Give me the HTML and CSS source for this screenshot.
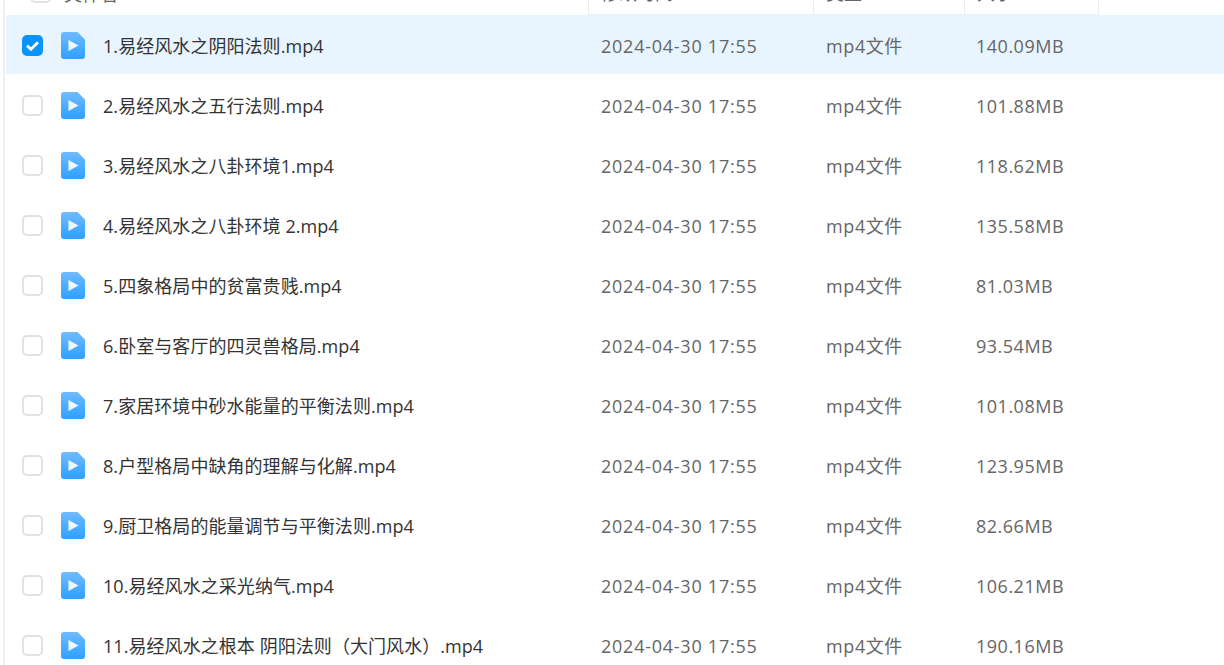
FILE: index.html
```html
<!DOCTYPE html>
<html lang="zh-CN">
<head>
    <meta charset="UTF-8">
    <title>文件列表</title>
    <link rel="stylesheet" href="styles.css">
</head>
<body>
    <svg class="defs" width="0" height="0">
        <defs>
            <linearGradient id="fileFill" x1="0" y1="0" x2="0" y2="1">
                <stop offset="0" stop-color="#6fbbff"/>
                <stop offset="1" stop-color="#30a0ff"/>
            </linearGradient>
            <symbol id="videoIcon" viewBox="0 0 24 27">
                <path d="M3 0H16.5L24 7.5V24a3 3 0 0 1-3 3H3a3 3 0 0 1-3-3V3a3 3 0 0 1 3-3Z" fill="url(#fileFill)"/>
                <path d="M7.5 8 17.5 13.5 7.5 19Z" fill="#eef7ff"/>
            </symbol>
        </defs>
    </svg>

    <div class="list">
        <div class="head">
            <div class="head-name"><span class="check"></span><span class="head-label">文件名</span></div>
            <div class="head-cell">修改时间</div>
            <div class="head-cell">类型</div>
            <div class="head-cell">大小</div>
        </div>

        <div class="row selected">
            <span class="check on"><svg width="21" height="21" viewBox="0 0 21 21"><path d="M5 10.6 9 14.2 16 7.2" fill="none" stroke="#fff" stroke-width="2.8"/></svg></span>
            <svg class="icon"><use href="#videoIcon"/></svg>
            <span class="name">1.易经风水之阴阳法则.mp4</span>
            <span class="date">2024-04-30 17:55</span>
            <span class="type">mp4文件</span>
            <span class="size">140.09MB</span>
        </div>
        <div class="row">
            <span class="check"></span>
            <svg class="icon"><use href="#videoIcon"/></svg>
            <span class="name">2.易经风水之五行法则.mp4</span>
            <span class="date">2024-04-30 17:55</span>
            <span class="type">mp4文件</span>
            <span class="size">101.88MB</span>
        </div>
        <div class="row">
            <span class="check"></span>
            <svg class="icon"><use href="#videoIcon"/></svg>
            <span class="name">3.易经风水之八卦环境1.mp4</span>
            <span class="date">2024-04-30 17:55</span>
            <span class="type">mp4文件</span>
            <span class="size">118.62MB</span>
        </div>
        <div class="row">
            <span class="check"></span>
            <svg class="icon"><use href="#videoIcon"/></svg>
            <span class="name">4.易经风水之八卦环境 2.mp4</span>
            <span class="date">2024-04-30 17:55</span>
            <span class="type">mp4文件</span>
            <span class="size">135.58MB</span>
        </div>
        <div class="row">
            <span class="check"></span>
            <svg class="icon"><use href="#videoIcon"/></svg>
            <span class="name">5.四象格局中的贫富贵贱.mp4</span>
            <span class="date">2024-04-30 17:55</span>
            <span class="type">mp4文件</span>
            <span class="size">81.03MB</span>
        </div>
        <div class="row">
            <span class="check"></span>
            <svg class="icon"><use href="#videoIcon"/></svg>
            <span class="name">6.卧室与客厅的四灵兽格局.mp4</span>
            <span class="date">2024-04-30 17:55</span>
            <span class="type">mp4文件</span>
            <span class="size">93.54MB</span>
        </div>
        <div class="row">
            <span class="check"></span>
            <svg class="icon"><use href="#videoIcon"/></svg>
            <span class="name">7.家居环境中砂水能量的平衡法则.mp4</span>
            <span class="date">2024-04-30 17:55</span>
            <span class="type">mp4文件</span>
            <span class="size">101.08MB</span>
        </div>
        <div class="row">
            <span class="check"></span>
            <svg class="icon"><use href="#videoIcon"/></svg>
            <span class="name">8.户型格局中缺角的理解与化解.mp4</span>
            <span class="date">2024-04-30 17:55</span>
            <span class="type">mp4文件</span>
            <span class="size">123.95MB</span>
        </div>
        <div class="row">
            <span class="check"></span>
            <svg class="icon"><use href="#videoIcon"/></svg>
            <span class="name">9.厨卫格局的能量调节与平衡法则.mp4</span>
            <span class="date">2024-04-30 17:55</span>
            <span class="type">mp4文件</span>
            <span class="size">82.66MB</span>
        </div>
        <div class="row">
            <span class="check"></span>
            <svg class="icon"><use href="#videoIcon"/></svg>
            <span class="name">10.易经风水之采光纳气.mp4</span>
            <span class="date">2024-04-30 17:55</span>
            <span class="type">mp4文件</span>
            <span class="size">106.21MB</span>
        </div>
        <div class="row">
            <span class="check"></span>
            <svg class="icon"><use href="#videoIcon"/></svg>
            <span class="name">11.易经风水之根本 阴阳法则（大门风水）.mp4</span>
            <span class="date">2024-04-30 17:55</span>
            <span class="type">mp4文件</span>
            <span class="size">190.16MB</span>
        </div>
    </div>
</body>
</html>
```

FILE: styles.css
```css
* {
    box-sizing: border-box;
    margin: 0;
    padding: 0;
}

html, body {
    height: 100%;
    overflow: hidden;
}

body {
    background: #fff;
    color: #333;
    font-family: "Open Sans", "Noto Sans CJK SC", sans-serif;
    font-size: 18px;
}

.defs {
    position: absolute;
}

.list {
    margin-left: 3px;
    height: 100%;
    border-left: 2px solid #f0f0f0;
    padding-left: 1px;
    overflow: hidden;
}

/* header is scrolled mostly out of view */
.head {
    display: grid;
    grid-template-columns: 582px 225px 151px 135px;
    height: 15px;
    overflow: hidden;
}

.head-name,
.head-cell {
    display: flex;
    align-items: flex-end;
    height: 15px;
    padding-bottom: 9px;
    line-height: 24px;
    color: #666;
}

.head-name {
    padding-left: 24px;
}

.head-name .check {
    margin-bottom: 3px;
}

.head-label {
    margin-left: 13px;
}

.head-cell {
    padding-left: 12px;
    border-left: 1px solid #ececec;
    border-bottom: 1px solid #f0f0f0;
}

.head-cell:last-child {
    border-right: 1px solid #ececec;
}

.row {
    display: flex;
    align-items: center;
    height: 60px;
    border-bottom: 1px solid #fff;
    padding: 2px 0 0 16px;
    line-height: 24px;
}

.selected {
    background: #e8f5fe;
}

.check {
    flex: none;
    width: 21px;
    height: 21px;
    border: 2px solid #e2e2e2;
    border-radius: 5px;
    background: #fff;
}

.check.on {
    border: none;
    background: #0a93fb;
}

.check svg {
    display: block;
}

.icon {
    flex: none;
    width: 24px;
    height: 27px;
    margin-left: 18px;
}

.name {
    flex: none;
    width: 498px;
    margin-left: 18px;
    color: #333;
    letter-spacing: 0.06px;
}

.date {
    flex: none;
    width: 225px;
    color: #666;
    letter-spacing: 0.75px;
}

.type {
    flex: none;
    width: 150px;
    color: #666;
    letter-spacing: 0.6px;
}

.size {
    flex: none;
    color: #666;
    letter-spacing: 0.5px;
}
```
